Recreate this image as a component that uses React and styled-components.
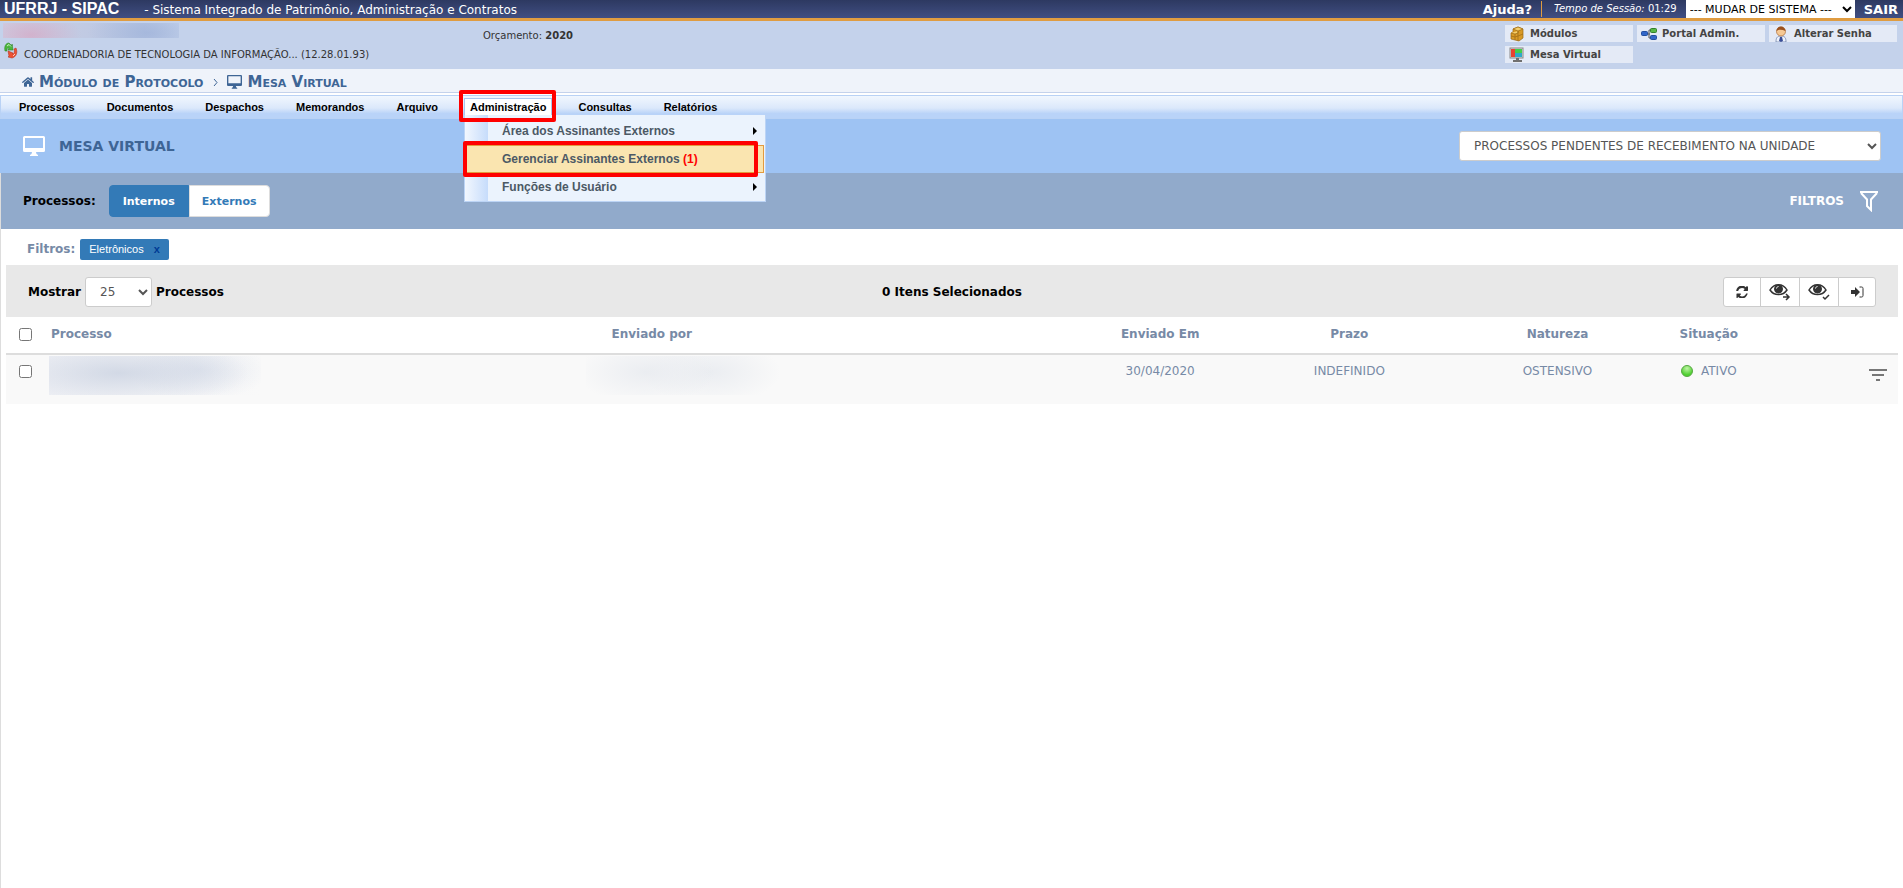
import React from 'react'
import styled, { createGlobalStyle, css } from 'styled-components'
import { FaHome } from 'react-icons/fa'

const verdana = '"DejaVu Sans", sans-serif'
const arial = '"Liberation Sans", sans-serif'

const GlobalStyle = createGlobalStyle`
  * {
    box-sizing: border-box;
  }

  html,
  body,
  #root {
    height: 100%;
  }

  body {
    margin: 0;
    background: #ffffff;
    color: #000000;
    font-family: ${verdana};
    font-size: 12px;
  }

  a {
    color: inherit;
    text-decoration: none;
  }

  button,
  select {
    font-family: inherit;
  }
`

const Page = styled.div`
  display: flex;
  flex-direction: column;
  min-height: 100%;
`

const TopBar = styled.header`
  display: flex;
  justify-content: space-between;
  align-items: center;
  height: 21px;
  padding: 0 5px 0 4px;
  color: #ffffff;
  background: linear-gradient(#2d3961, #404e82);
  border-bottom: 3px solid #df9c41;
`

const Brand = styled.div`
  display: flex;
  align-items: baseline;
  gap: 25px;
  font-size: 12px;
`

const BrandName = styled.strong`
  font-family: ${arial};
  font-size: 16px;
`

const Session = styled.div`
  display: flex;
  align-items: center;
  gap: 9px;
  font-size: 10px;
`

const TopLink = styled.a`
  font-size: 13px;
  font-weight: bold;
`

const SessionTime = styled.span`
  padding-left: 12px;
  line-height: 16px;
  border-left: 1px solid #df9c41;
`

const Select = styled.select`
  height: ${({ tall }) => (tall ? 30 : 18)}px;
  padding: ${({ tall }) => (tall ? '0 0 0 10px' : '0')};
  color: ${({ tall }) => (tall ? '#555555' : '#000000')};
  font-size: ${({ tall }) => (tall ? 12 : 11)}px;
  background: #ffffff;
  border: ${({ tall }) => (tall ? '1px solid #cccccc' : 'none')};
  border-radius: ${({ tall }) => (tall ? 3 : 0)}px;
`

const SystemSelect = styled(Select)`
  width: 169px;
`

const BoxSelect = styled(Select)`
  width: 422px;
`

const CountSelect = styled(Select)`
  width: 67px;
`

const UserPanel = styled.section`
  display: grid;
  grid-template-columns: 483px 1fr auto;
  height: 48px;
  font-size: 10px;
  color: #333333;
  background: #c4d2eb;
`

const UserInfo = styled.div`
  display: flex;
  flex-direction: column;
  padding: 2px 0 0 3px;
  gap: 2px;
`

const HiddenName = styled.div`
  width: 176px;
  height: 15px;
  background:
    radial-gradient(ellipse 50px 24px at 28px 12px, rgba(216, 160, 190, 0.6), rgba(216, 160, 190, 0)),
    radial-gradient(ellipse 60px 24px at 145px 10px, rgba(158, 178, 218, 0.7), rgba(158, 178, 218, 0)),
    linear-gradient(90deg, #cdd0e4, #b8c6e2 80%, #c4d2eb);
`

const Unit = styled.div`
  display: flex;
  align-items: center;
  gap: 6px;
  padding-left: 1px;

  span {
    padding-top: 9px;
  }
`

const Budget = styled.div`
  padding-top: 9px;
`

const Shortcuts = styled.nav`
  display: grid;
  grid-template-columns: repeat(3, 128px);
  grid-auto-rows: 17px;
  gap: 4px;
  padding: 4px 6px 0 0;
`

const Shortcut = styled.a`
  display: flex;
  align-items: center;
  gap: 5px;
  padding-left: 4px;
  color: #444444;
  font-size: 10px;
  font-weight: bold;
  background: #e4eaf6;
`

const Breadcrumb = styled.nav`
  display: flex;
  align-items: center;
  gap: 6px;
  height: 24px;
  padding: 3px 22px 0;
  color: #3e6595;
  font-size: 15px;
  font-weight: bold;
  font-variant: small-caps;
  background: #eff3fa;
  border-bottom: 1px solid #c4d2eb;
`

const Crumb = styled.a`
  display: flex;
  align-items: center;
  gap: 5px;
`

const MenuBar = styled.nav`
  display: flex;
  align-items: stretch;
  gap: 20px;
  height: 24px;
  margin-top: 2px;
  padding: 2px 12px;
  font-family: ${arial};
  font-size: 11px;
  font-weight: bold;
  border: 1px solid #b9d2f5;
  background: linear-gradient(#f1f7fe, #dbe8fb 55%, #b9d3f8 80%, #b9d3f8);
`

const MenuItem = styled.div`
  position: relative;
  display: flex;
  padding: 0 5px;
  align-items: center;
  border: 1px solid transparent;

  ${({ open }) =>
    open &&
    css`
      background: #ffffff;
      border-color: #a9c6ee;
    `}
`

const Marker = styled.span`
  position: absolute;
  z-index: 3;
  inset: ${({ inset }) => inset};
  border: 4px solid #ff0000;
  border-radius: 2px;
  pointer-events: none;
`

const Dropdown = styled.div`
  position: absolute;
  z-index: 2;
  top: 100%;
  left: -1px;
  width: 302px;
  padding: 2px 1px 0;
  border: 1px solid #bcd4f5;
  border-top: none;
  background: linear-gradient(90deg, #f2f7fe, #c6dcfb 23px, #ebf3fd 23px);
`

const DropdownItem = styled.a`
  position: relative;
  display: flex;
  justify-content: space-between;
  align-items: center;
  height: 28px;
  padding: 0 6px 0 35px;
  color: #4c5965;
  font-size: 12px;
  border: 1px solid transparent;

  ${({ active }) =>
    active &&
    css`
      background: #fae5b0;
      border-color: #e39b3f;
    `}

  em {
    color: #ff0000;
    font-style: normal;
  }
`

const Arrow = styled.span`
  border-left: 4px solid #000000;
  border-top: 4px solid transparent;
  border-bottom: 4px solid transparent;
`

const TitleBar = styled.section`
  display: flex;
  align-items: center;
  height: 54px;
  padding: 0 22px 0 23px;
  gap: 14px;
  color: #ffffff;
  background: #9ec3f3;
`

const Title = styled.h1`
  flex: 1;
  margin: 0;
  color: #3e6595;
  font-size: 14px;
`

const Main = styled.main`
  flex: 1;
  border-left: 1px solid #dddddd;
`

const KindBar = styled.section`
  display: flex;
  align-items: center;
  height: 56px;
  padding: 0 25px 0 22px;
  background: #91aacb;
`

const Label = styled.strong`
  color: ${({ muted }) => (muted ? '#778aa6' : '#000000')};
  font-size: 12px;
`

const KindGroup = styled.div`
  display: flex;
  flex: 1;
  margin-left: 13px;
`

const KindButton = styled.button`
  width: ${({ active }) => (active ? 80 : 81)}px;
  height: 32px;
  padding: 0;
  font-size: 11px;
  font-weight: bold;
  color: ${({ active }) => (active ? '#ffffff' : '#337ab7')};
  background: ${({ active }) => (active ? '#337ab7' : '#ffffff')};
  border: 1px solid ${({ active }) => (active ? '#337ab7' : '#dddddd')};
  border-radius: ${({ active }) => (active ? '4px 0 0 4px' : '0 4px 4px 0')};
`

const FilterToggle = styled.button`
  display: flex;
  align-items: center;
  gap: 16px;
  padding: 0;
  color: #ffffff;
  font-size: 12px;
  font-weight: bold;
  background: none;
  border: none;
`

const FilterRow = styled.div`
  display: flex;
  align-items: center;
  gap: 5px;
  height: 36px;
  padding: 4px 26px 0;
`

const Tag = styled.span`
  display: flex;
  align-items: center;
  gap: 10px;
  height: 21px;
  padding: 0 9px;
  color: #ffffff;
  font-family: ${arial};
  font-size: 11px;
  background: #337ab7;
  border-radius: 2px;
`

const TagClose = styled.button`
  padding: 0;
  color: #003a94;
  font-family: ${arial};
  font-size: 11px;
  font-weight: bold;
  background: none;
  border: none;
`

const Listing = styled.section`
  margin: 0 5px;
`

const Toolbar = styled.div`
  display: grid;
  grid-template-columns: 1fr auto 1fr;
  align-items: center;
  height: 52px;
  padding: 2px 22px 0;
  background: #e8e8e8;
`

const PageSize = styled.div`
  display: flex;
  align-items: center;
  gap: 4px;
`

const Actions = styled.div`
  display: flex;
  justify-self: end;
`

const ActionButton = styled.button`
  display: flex;
  justify-content: center;
  align-items: center;
  width: 40px;
  height: 30px;
  margin-left: -1px;
  padding: 0;
  color: #333333;
  background: #ffffff;
  border: 1px solid #cccccc;

  &:first-child {
    width: 38px;
    border-radius: 3px 0 0 3px;
  }

  &:last-child {
    width: 38px;
    border-radius: 0 3px 3px 0;
  }
`

const Table = styled.table`
  width: 100%;
  table-layout: fixed;
  border-collapse: collapse;
  color: #778aa6;
  font-size: 12px;
`

const Col = styled.col`
  width: ${({ size }) => size};
`

const Th = styled.th`
  height: 37px;
  padding: 9px 0 0;
  vertical-align: top;
  line-height: 16px;
  text-align: ${({ align }) => align || 'center'};
  border-bottom: 2px solid #dddddd;
`

const Td = styled.td`
  height: 50px;
  padding: 8px 0 0;
  vertical-align: top;
  line-height: 16px;
  text-align: ${({ align }) => align || 'center'};
  background: #f9f9f9;
`

const Check = styled.input`
  display: block;
  width: 13px;
  height: 13px;
  margin: 2px 0 0 13px;
`

const HiddenProcess = styled.div`
  width: 212px;
  height: 39px;
  margin: -7px 0 0 -2px;
  background:
    radial-gradient(ellipse 130px 34px at 70px 17px, rgba(196, 205, 222, 0.7), rgba(196, 205, 222, 0)),
    radial-gradient(ellipse 70px 30px at 150px 14px, rgba(205, 213, 229, 0.5), rgba(205, 213, 229, 0)),
    linear-gradient(90deg, #f1f2f6, #f9f9f9);
`

const HiddenSender = styled.div`
  width: 200px;
  height: 39px;
  margin: -7px 0 0 -25px;
  background:
    radial-gradient(ellipse 70px 32px at 60px 16px, rgba(231, 234, 239, 0.8), rgba(231, 234, 239, 0)),
    radial-gradient(ellipse 70px 32px at 125px 16px, rgba(231, 234, 239, 0.8), rgba(231, 234, 239, 0));
`

const Status = styled.span`
  display: inline-flex;
  align-items: center;
  gap: 8px;

  &::before {
    content: '';
    width: 10px;
    height: 10px;
    border: 1px solid #59a845;
    border-radius: 50%;
    background: radial-gradient(circle at 50% 25%, #c0f5a6, #4fd030 70%);
  }
`

const RowMenu = styled.button`
  display: block;
  margin: 6px 0 0 auto;
  padding: 0 11px 0 0;
  line-height: 0;
  background: none;
  border: none;
`

const menu = [
  'Processos',
  'Documentos',
  'Despachos',
  'Memorandos',
  'Arquivo',
  'Administração',
  'Consultas',
  'Relatórios',
]

const Monitor = ({ width = 22 }) => (
  <svg width={width} viewBox="0 0 22 20" fill="currentColor">
    <path
      fillRule="evenodd"
      d="M1.5 0h19A1.500 1.500 0 0 1 22 1.500v13a1.500 1.500 0 0 1-1.500 1.500h-19A1.500 1.500 0 0 1 0 14.500v-13A1.500 1.500 0 0 1 1.500 0zM2 2v10h18V2zM9 16h4l.5 2 1.500 1v1H7v-1l1.500-1z"
    />
  </svg>
)

const Funnel = () => (
  <svg width="18" height="21" viewBox="0 0 18 21" fill="none" stroke="#ffffff" strokeWidth="2">
    <path d="M0 1h18M1 2l6 6.500v6.500l4 4V8.500L17 2" />
  </svg>
)

const SwapIcon = () => (
  <svg width="14" height="17" viewBox="0 0 14 17">
    <path d="M1 9C0 4 2 1 5 1l3 3v-2l1 6-5 0 1-2C3 5 3 7 3 9z" fill="#4cb83c" stroke="#2b8426" strokeWidth=".6" />
    <path d="M12 6c2 5 0 9-4 10l-4-1 1-1-1-5 5 2-1 1c2 0 3-2 2-5z" fill="#ee5233" stroke="#b73421" strokeWidth=".6" />
    <path d="M3 4l2-1.500 2 2M9 14l2-2" fill="none" stroke="#ffffff" strokeOpacity=".7" />
  </svg>
)

const BoxesIcon = () => (
  <svg width="16" height="16" viewBox="0 0 16 16" stroke="#9c6a14" strokeWidth=".7">
    <path d="M4 3l5-2 5 2v9l-4 3-8-2V7l2-1z" fill="#d99a27" />
    <path d="M4 3l5 2 5-2-5-2zM2 7l4 1 3-1V5" fill="#f6d06d" />
    <path d="M6 8v6M9 5v10M2 10l4 1 3-1 5-2" fill="none" />
  </svg>
)

const PortalIcon = () => (
  <svg width="16" height="14" viewBox="0 0 16 14">
    <path d="M6 7h3M8 3v8h2M8 3h2" stroke="#555555" fill="none" />
    <rect x=".5" y="4.500" width="6" height="4" rx="1" fill="#3267c9" stroke="#234f9d" />
    <rect x="9.500" y="1.500" width="6" height="4" rx="1" fill="#57b845" stroke="#33812b" />
    <rect x="9.500" y="8.500" width="6" height="4" rx="1" fill="#3267c9" stroke="#234f9d" />
  </svg>
)

const UserIcon = () => (
  <svg width="16" height="16" viewBox="0 0 16 16">
    <path d="M3 16c0-4 1-6 5-6s5 2 5 6z" fill="#edf2fb" stroke="#6277a5" strokeWidth=".7" />
    <path d="M7 11h2l1 4-2 1-2-1z" fill="#394e96" />
    <circle cx="8" cy="5.500" r="4.500" fill="#f6c994" stroke="#a35a20" strokeWidth=".6" />
    <path d="M3.500 5C4-1 12-1 12.500 5c-3-1-6-2-9 0z" fill="#9b511e" />
  </svg>
)

const ScreenIcon = () => (
  <svg width="16" height="16" viewBox="0 0 16 16">
    <rect x="1" y="1" width="13" height="10" fill="#dddddd" stroke="#888888" />
    <path d="M2 2h5v8H2z" fill="#e9422f" />
    <path d="M6 2h7v4H6z" fill="#43cf4a" />
    <path d="M6 6h7v4H6z" fill="#2fa8c8" />
    <path d="M7 11h3v2h3v2H4v-2h3z" fill="#707070" />
  </svg>
)

const EyeIcon = ({ children }) => (
  <svg width="22" height="18" viewBox="0 0 22 18" fill="none" stroke="#333333">
    <path d="M1 7c4-7 13-7 17 0-4 6-13 6-17 0z" strokeWidth="1.500" />
    <circle cx="9.500" cy="6" r="4" fill="#333333" />
    <path d="M7.500 5.500c0-1 1-2 2-2" stroke="#ffffff" />
    <g strokeWidth="1.500">{children}</g>
  </svg>
)

const RefreshIcon = () => (
  <svg width="12" height="12" viewBox="0 0 1536 1536" fill="currentColor">
    <path d="M1511 928c0 2 0 5-1 7-111 463-497 793-992 601-80-31-155-79-220-141l-129 129c-12 12-28 19-45 19-35 0-64-29-64-64v-448c0-35 29-64 64-64h448c35 0 64 29 64 64 0 17-7 33-19 45l-137 137c85 79 197 123 313 123 178 0 343-92 436-244 22-34 33-71 49-108 5-14 15-23 30-23h192c18 0 32 15 32 32zM1536 128v448c0 35-29 64-64 64h-448c-35 0-64-29-64-64 0-17 7-33 19-45l138-138C1032 315 916 256 768 256c-178 0-343 92-436 244-22 34-33 71-49 108-5 14-15 23-30 23H54c-18 0-32-15-32-32v-7C134 128 524-192 1018 10c80 31 156 79 221 141l130-129c12-12 28-19 45-19 35 0 64 29 64 64z" />
  </svg>
)

const EnterIcon = () => (
  <svg width="13" height="12" viewBox="0 0 13 12" fill="none" stroke="#333333">
    <path d="M0 4h4V1l5 5-5 5V8H0z" fill="#333333" stroke="none" />
    <path d="M8.500 1h2c1 0 1.500.5 1.500 1.500v7c0 1-.5 1.500-1.500 1.500h-2" />
  </svg>
)

const LinesIcon = () => (
  <svg width="18" height="12" viewBox="0 0 18 12" fill="#777777">
    <path d="M0 0h18v2H0zM3 5h12v2H3zM7 10h4v2H7z" />
  </svg>
)

const AdminMenu = () => (
  <Dropdown>
    <DropdownItem href="#">
      Área dos Assinantes Externos
      <Arrow />
    </DropdownItem>
    <DropdownItem href="#" active>
      <span>
        Gerenciar Assinantes Externos <em>(1)</em>
      </span>
      <Marker inset="-5px 5px -5px -4px" />
    </DropdownItem>
    <DropdownItem href="#">
      Funções de Usuário
      <Arrow />
    </DropdownItem>
  </Dropdown>
)

export default function App() {
  return (
    <>
      <GlobalStyle />
      <Page>
        <TopBar>
          <Brand>
            <BrandName>UFRRJ - SIPAC</BrandName>
            <span>- Sistema Integrado de Patrimônio, Administração e Contratos</span>
          </Brand>
          <Session>
            <TopLink href="#">Ajuda?</TopLink>
            <SessionTime>
              <i>Tempo de Sessão:</i> 01:29
            </SessionTime>
            <SystemSelect aria-label="Mudar de sistema">
              <option>--- MUDAR DE SISTEMA ---</option>
            </SystemSelect>
            <TopLink href="#">SAIR</TopLink>
          </Session>
        </TopBar>

        <UserPanel>
          <UserInfo>
            <HiddenName />
            <Unit>
              <SwapIcon />
              <span>COORDENADORIA DE TECNOLOGIA DA INFORMAÇÃO... (12.28.01.93)</span>
            </Unit>
          </UserInfo>
          <Budget>
            Orçamento: <b>2020</b>
          </Budget>
          <Shortcuts>
            <Shortcut href="#">
              <BoxesIcon />
              Módulos
            </Shortcut>
            <Shortcut href="#">
              <PortalIcon />
              Portal Admin.
            </Shortcut>
            <Shortcut href="#">
              <UserIcon />
              Alterar Senha
            </Shortcut>
            <Shortcut href="#">
              <ScreenIcon />
              Mesa Virtual
            </Shortcut>
          </Shortcuts>
        </UserPanel>

        <Breadcrumb>
          <Crumb href="#">
            <FaHome size={12} />
            Módulo de Protocolo
          </Crumb>
          <svg width="12" height="9" viewBox="0 0 12 9" fill="none" stroke="currentColor">
            <path d="M5 1l3 3.500L5 8" />
          </svg>
          <Crumb href="#">
            <Monitor width={15} />
            Mesa Virtual
          </Crumb>
        </Breadcrumb>

        <MenuBar>
          {menu.map((name) => (
            <MenuItem key={name} open={name === 'Administração'}>
              <a href="#">{name}</a>
              {name === 'Administração' && (
                <>
                  <Marker inset="-9px -5px -7px -6px" />
                  <AdminMenu />
                </>
              )}
            </MenuItem>
          ))}
        </MenuBar>

        <TitleBar>
          <Monitor />
          <Title>MESA VIRTUAL</Title>
          <BoxSelect tall aria-label="Caixa de processos">
            <option>PROCESSOS PENDENTES DE RECEBIMENTO NA UNIDADE</option>
          </BoxSelect>
        </TitleBar>

        <Main>
          <KindBar>
            <Label>Processos:</Label>
            <KindGroup>
              <KindButton active>Internos</KindButton>
              <KindButton>Externos</KindButton>
            </KindGroup>
            <FilterToggle>
              FILTROS
              <Funnel />
            </FilterToggle>
          </KindBar>

          <FilterRow>
            <Label muted>Filtros:</Label>
            <Tag>
              Eletrônicos
              <TagClose aria-label="Remover filtro">x</TagClose>
            </Tag>
          </FilterRow>

          <Listing>
            <Toolbar>
              <PageSize>
                <Label as="label" htmlFor="page-size">
                  <b>Mostrar</b>
                </Label>
                <CountSelect tall id="page-size">
                  <option>25</option>
                </CountSelect>
                <Label>Processos</Label>
              </PageSize>
              <Label>0 Itens Selecionados</Label>
              <Actions>
                <ActionButton aria-label="Atualizar">
                  <RefreshIcon />
                </ActionButton>
                <ActionButton aria-label="Enviar para leitura">
                  <EyeIcon>
                    <path d="M14 14h6M17 11l3 3-3 3" />
                  </EyeIcon>
                </ActionButton>
                <ActionButton aria-label="Marcar como lido">
                  <EyeIcon>
                    <path d="M15 14l2 2 4-4" />
                  </EyeIcon>
                </ActionButton>
                <ActionButton aria-label="Receber">
                  <EnterIcon />
                </ActionButton>
              </Actions>
            </Toolbar>

            <Table>
              <colgroup>
                <Col size="45px" />
                <Col />
                <Col size="24%" />
                <Col size="10%" />
                <Col size="10%" />
                <Col size="12%" />
                <Col size="4%" />
                <Col size="8%" />
              </colgroup>
              <thead>
                <tr>
                  <Th>
                    <Check type="checkbox" aria-label="Selecionar todos" />
                  </Th>
                  <Th align="left">Processo</Th>
                  <Th align="left">Enviado por</Th>
                  <Th>Enviado Em</Th>
                  <Th>Prazo</Th>
                  <Th>Natureza</Th>
                  <Th>Situação</Th>
                  <Th />
                </tr>
              </thead>
              <tbody>
                <tr>
                  <Td>
                    <Check type="checkbox" aria-label="Selecionar processo" />
                  </Td>
                  <Td align="left">
                    <HiddenProcess />
                  </Td>
                  <Td align="left">
                    <HiddenSender />
                  </Td>
                  <Td>30/04/2020</Td>
                  <Td>INDEFINIDO</Td>
                  <Td>OSTENSIVO</Td>
                  <Td>
                    <Status>ATIVO</Status>
                  </Td>
                  <Td>
                    <RowMenu aria-label="Opções do processo">
                      <LinesIcon />
                    </RowMenu>
                  </Td>
                </tr>
              </tbody>
            </Table>
          </Listing>
        </Main>
      </Page>
    </>
  )
}
